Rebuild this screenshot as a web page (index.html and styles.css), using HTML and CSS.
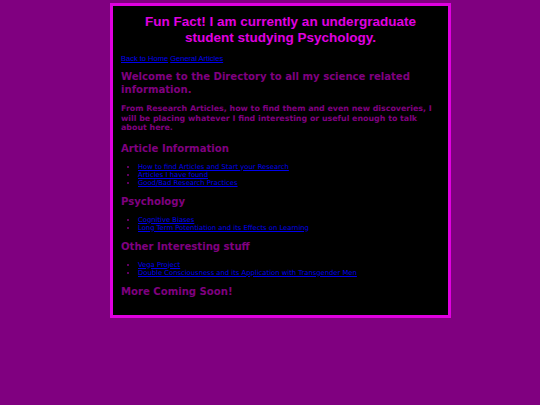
FILE: index.html
```html
<!DOCTYPE html>
<html>
<head>
	<title>Science Directory</title>
	<link rel="stylesheet" href="styles.css">
</head>
<body>
	<div id="content">
		<h1 class="fact">Fun Fact! I am currently an undergraduate student studying Psychology.</h1>
		<p class="nav"><a href="#">Back to Home</a> <a href="#">General Articles</a></p>

		<h2>Welcome to the Directory to all my science related information.</h2>
		<p class="intro">From Research Articles, how to find them and even new discoveries, I will be placing whatever I find interesting or useful enough to talk about here.</p>

		<h2>Article Information</h2>
		<ul>
			<li><a href="#">How to find Articles and Start your Research</a></li>
			<li><a href="#">Articles I have found</a></li>
			<li><a href="#">Good/Bad Research Practices</a></li>
		</ul>

		<h2>Psychology</h2>
		<ul>
			<li><a href="#">Cognitive Biases</a></li>
			<li><a href="#">Long Term Potentiation and its Effects on Learning</a></li>
		</ul>

		<h2>Other Interesting stuff</h2>
		<ul>
			<li><a href="#">Vega Project</a></li>
			<li><a href="#">Double Consciousness and its Application with Transgender Men</a></li>
		</ul>

		<h2>More Coming Soon!</h2>
	</div>
</body>
</html>
```

FILE: styles.css
```css
body {
	background-color: #800080;
	margin: 0;
	padding-top: 3px;
	font-family: "DejaVu Sans", Verdana, sans-serif;
	color: #800080;
}
#content {
	background-color: black;
	border: 3px solid #e000e0;
	width: 319px;
	margin-left: 110px;
	padding: 8px 8px 9px 8px;
}
.fact {
	font-family: "Liberation Sans", Arial, sans-serif;
	color: #e000e0;
	font-size: 13.5px;
	line-height: 16px;
	text-align: center;
	margin: 0 0 8px 0;
}
.nav {
	font-family: "Liberation Sans", Arial, sans-serif;
	font-size: 7.5px;
	line-height: 10px;
	margin: 0 0 6px 0;
}
a { color: #0000ee; }
h2 {
	font-size: 10.1px;
	line-height: 13px;
	margin: 0 0 8px 0;
}
.intro {
	font-weight: bold;
	font-size: 7.9px;
	line-height: 9.5px;
	margin: 0 0 9px 0;
}
ul {
	font-size: 6.8px;
	line-height: 8px;
	margin: 0 0 8px 0;
	padding-left: 17px;
}
```
